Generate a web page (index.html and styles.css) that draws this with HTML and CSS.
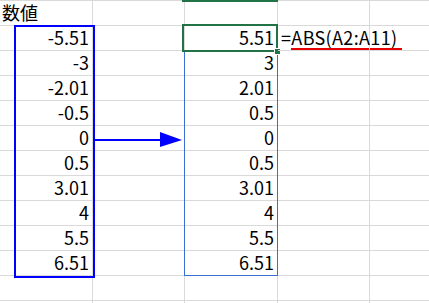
FILE: index.html
```html
<!DOCTYPE html>
<html lang="ja">
<head>
<meta charset="utf-8">
<link rel="stylesheet" href="styles.css">
</head>
<body>
<div class="sheet">
  <div class="grid">
    <div class="c txt">数値</div><div class="c"></div><div class="c"></div><div class="c"></div><div class="c"></div>
    <div class="c num">-5.51</div><div class="c"></div><div class="c num">5.51</div><div class="c txt formula">=<span class="ref">ABS(A2:A11)</span></div><div class="c"></div>
    <div class="c num">-3</div><div class="c"></div><div class="c num">3</div><div class="c"></div><div class="c"></div>
    <div class="c num">-2.01</div><div class="c"></div><div class="c num">2.01</div><div class="c"></div><div class="c"></div>
    <div class="c num">-0.5</div><div class="c"></div><div class="c num">0.5</div><div class="c"></div><div class="c"></div>
    <div class="c num">0</div><div class="c"></div><div class="c num">0</div><div class="c"></div><div class="c"></div>
    <div class="c num">0.5</div><div class="c"></div><div class="c num">0.5</div><div class="c"></div><div class="c"></div>
    <div class="c num">3.01</div><div class="c"></div><div class="c num">3.01</div><div class="c"></div><div class="c"></div>
    <div class="c num">4</div><div class="c"></div><div class="c num">4</div><div class="c"></div><div class="c"></div>
    <div class="c num">5.5</div><div class="c"></div><div class="c num">5.5</div><div class="c"></div><div class="c"></div>
    <div class="c num">6.51</div><div class="c"></div><div class="c num">6.51</div><div class="c"></div><div class="c"></div>
    <div class="c"></div><div class="c"></div><div class="c"></div><div class="c"></div><div class="c"></div>
    <div class="c"></div><div class="c"></div><div class="c"></div><div class="c"></div><div class="c"></div>
  </div>
  <div class="hdr-mark"></div>
  <div class="src-box"></div>
  <div class="dst-box"></div>
  <div class="active"></div>
  <div class="handle"></div>
  <div class="red-line"></div>
  <svg class="arrow" width="92" height="20" viewBox="0 0 92 20">
    <rect x="0" y="9" width="70" height="2" fill="#0000ff"/>
    <polygon points="67,2 89,10 67,17" fill="#0000ff"/>
  </svg>
</div>
</body>
</html>
```

FILE: styles.css
```css
html, body {
  margin: 0;
  padding: 0;
  background: #ffffff;
}
body {
  width: 429px;
  height: 303px;
  overflow: hidden;
  font-family: "Noto Sans CJK JP", "Noto Sans", sans-serif;
  font-size: 18px;
  color: #000;
}
.sheet {
  position: relative;
  width: 429px;
  height: 303px;
  overflow: hidden;
}
.grid {
  display: grid;
  grid-template-columns: 93px 92px 93px 92px 80px;
  grid-auto-rows: 25px;
  border-top: 1px solid #d9d9d9;
}
.c {
  box-sizing: border-box;
  border-right: 1px solid #d9d9d9;
  border-bottom: 1px solid #d9d9d9;
  display: flex;
  align-items: flex-end;
  line-height: 20px;
  padding-bottom: 3px;
  white-space: nowrap;
}
.num {
  justify-content: flex-end;
  padding-right: 3px;
}
.txt {
  padding-left: 2px;
}
.formula {
  overflow: visible;
  position: relative;
  z-index: 1;
  padding-left: 3px;
  letter-spacing: 0.35px;
}
.hdr-mark {
  position: absolute;
  left: 182px;
  top: 0;
  width: 96px;
  height: 2px;
  background: #217346;
}
.src-box {
  position: absolute;
  left: 14px;
  top: 25px;
  width: 81px;
  height: 253px;
  box-sizing: border-box;
  border: 2px solid #0000ff;
}
.dst-box {
  position: absolute;
  left: 184px;
  top: 50px;
  width: 94px;
  height: 226px;
  box-sizing: border-box;
  border: 1px solid #3a70d0;
  border-top: none;
}
.active {
  position: absolute;
  left: 182px;
  top: 24px;
  width: 96px;
  height: 28px;
  box-sizing: border-box;
  border: 2px solid #217346;
}
.handle {
  position: absolute;
  left: 274px;
  top: 48px;
  width: 7px;
  height: 7px;
  box-sizing: border-box;
  background: #217346;
  border: 1px solid #fff;
}
.red-line {
  position: absolute;
  left: 291px;
  top: 48px;
  width: 111px;
  height: 2px;
  background: #e60000;
}
.arrow {
  position: absolute;
  left: 93px;
  top: 130px;
}
```
